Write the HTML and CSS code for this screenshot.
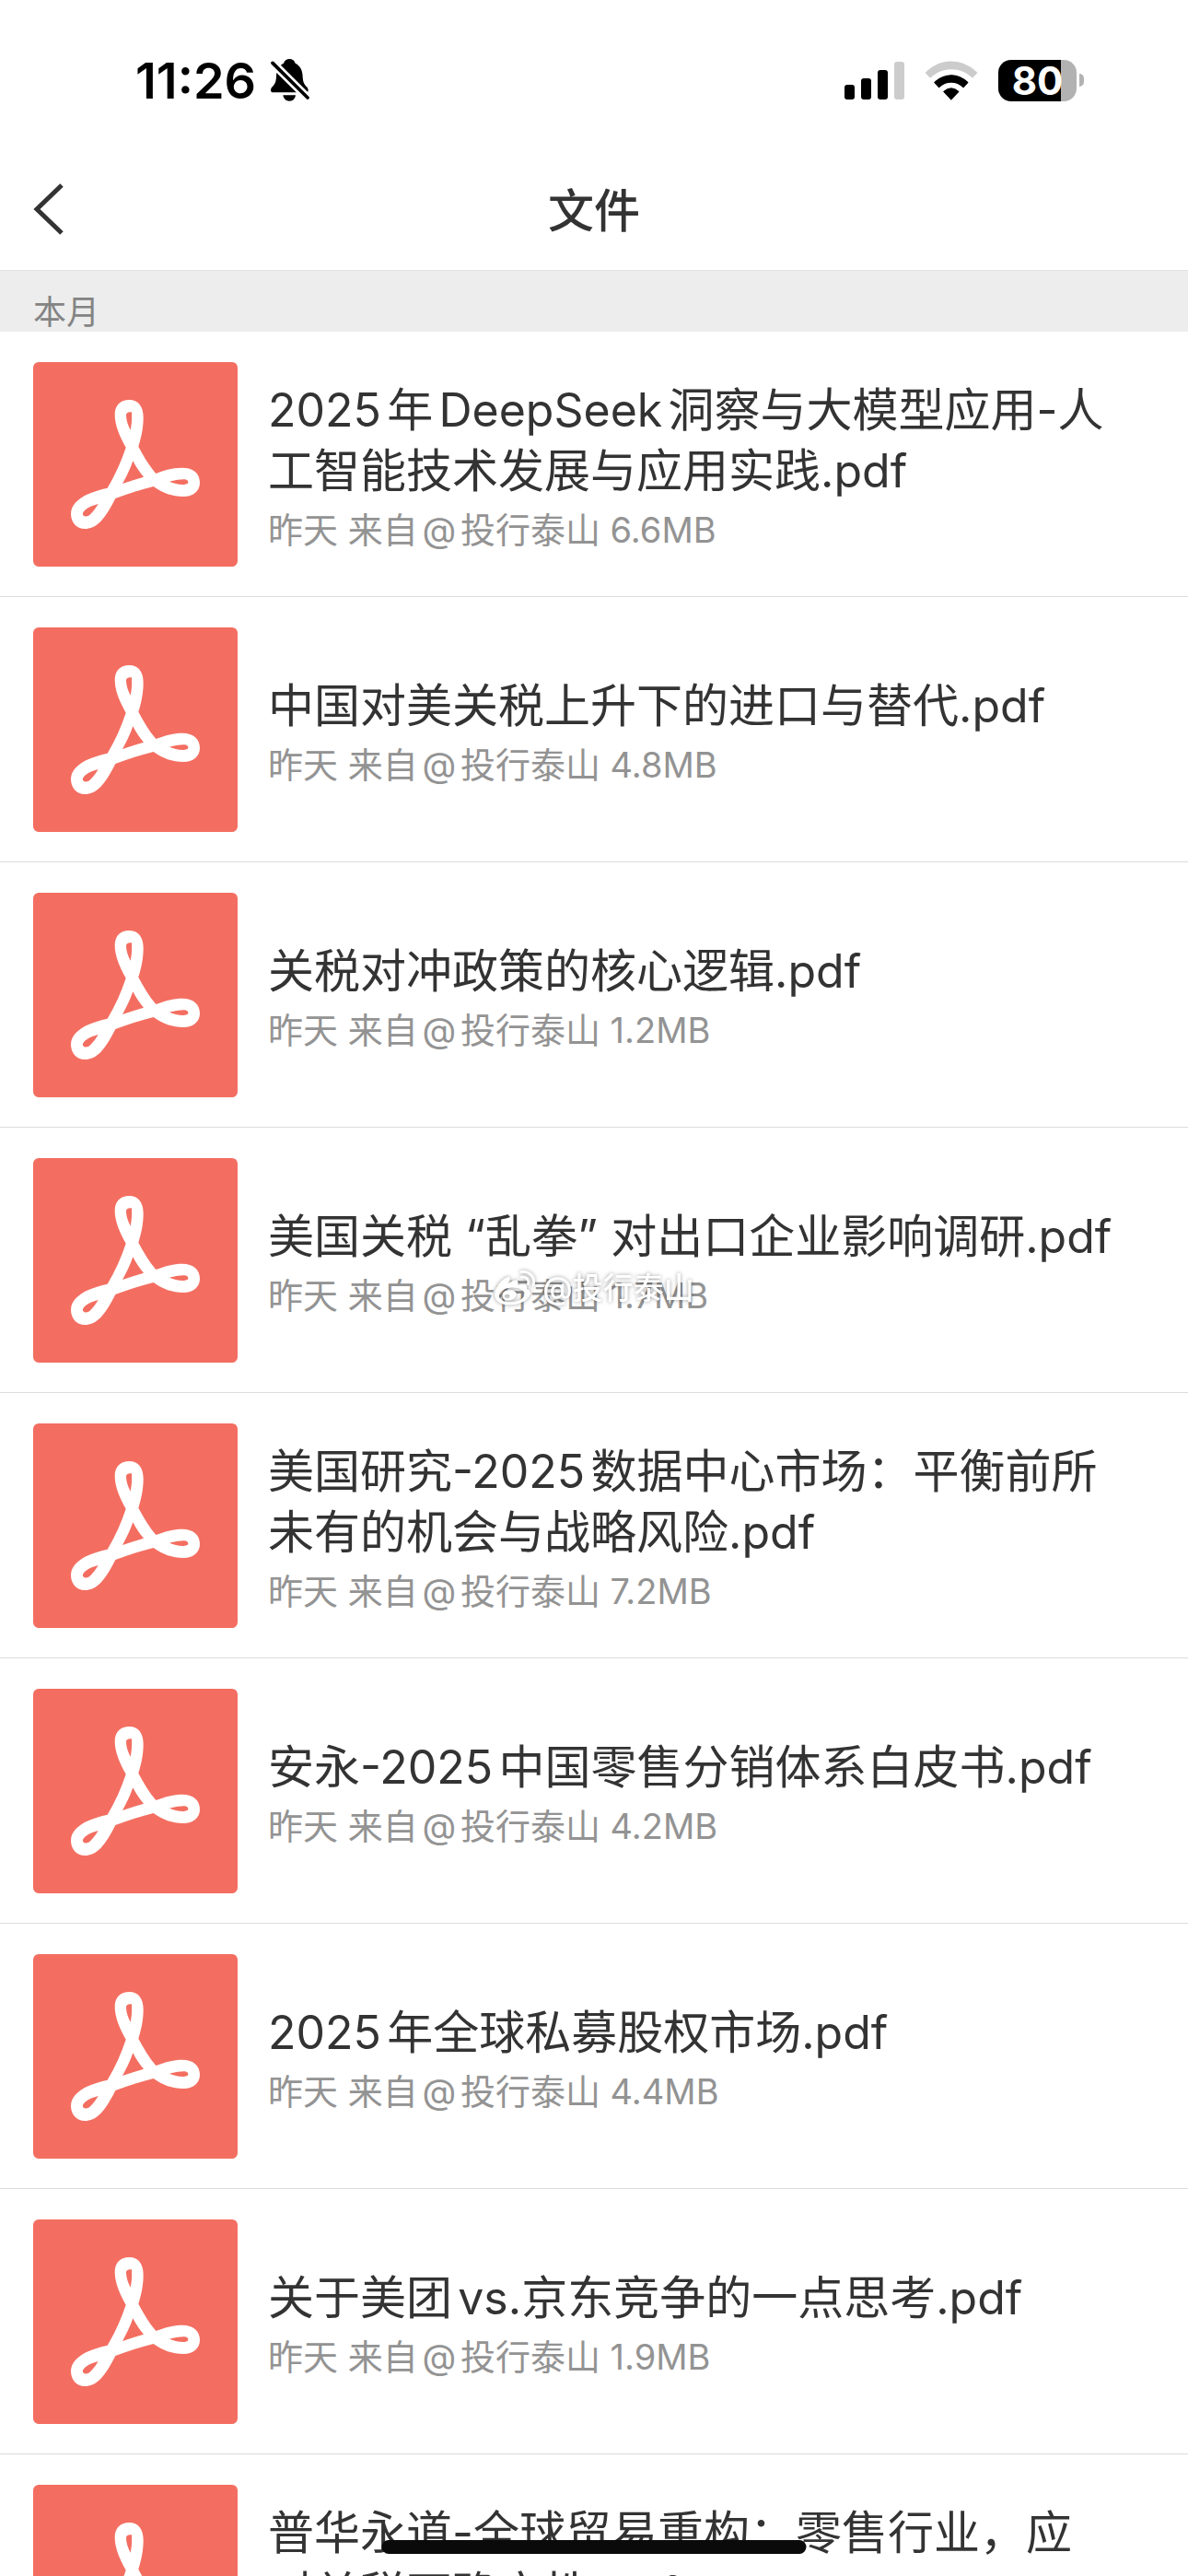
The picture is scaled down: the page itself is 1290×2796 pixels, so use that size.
FILE: index.html
```html
<!DOCTYPE html>
<html lang="zh-CN">
<head>
    <meta charset="UTF-8">
    <meta name="viewport" content="width=device-width, initial-scale=1.0">
    <title>文件</title>
    <link rel="stylesheet" href="styles.css">
</head>
<body>
    <!-- Shared icon shapes -->
    <svg class="sprite" aria-hidden="true">
        <symbol id="pdf" viewBox="108 69 666 666">
            <path fill="#fff" fill-rule="evenodd" d="M410 347C390 312 374 275 374 240C374 208 394 192 421 192C450 192 467 212 467 250C467 285 460 315 451 344C468 376 485 405 508 432C540 420 565 413 594 413C630 413 651 432 651 462C651 490 628 507 598 507C560 507 530 495 500 474C460 484 418 497 376 513C360 545 345 570 328 588C310 606 293 612 277 612C248 612 231 590 231 563C231 535 255 515 280 502C305 490 328 484 350 479C375 437 395 392 410 347ZM411 243C411 234 416 231 429 232C430 255 429 272 425 290C417 275 411 258 411 243ZM552 458C575 453 590 451 600 451C609 451 613 456 613 460C613 466 606 468 595 468C580 468 565 463 552 458ZM320 531C312 545 303 556 295 564C286 572 280 573 274 570C268 567 268 560 274 554C282 545 300 536 320 531ZM433 391C424 417 412 442 399 465C422 457 445 450 468 443C455 428 443 410 433 391Z"/>
        </symbol>
    </svg>

    <div class="app">
        <header class="status-bar">
            <div class="status-left">
                <span class="time">11:26</span>
                <svg class="bell" viewBox="24 30 126 138">
                    <path d="M85 30C76 30 68 36 66 44C50 52 42 68 42 88C41 105 38 112 29 121C22 128 22 139 32 139H138C148 139 148 128 141 121C132 112 129 105 128 88C128 68 120 52 104 44C102 36 94 30 85 30Z"/>
                    <path d="M64 148H105C103 160 96 167 85 167S66 160 64 148Z"/>
                    <path d="M20 33L154 166" stroke="#fff" stroke-width="27"/>
                    <path d="M30 43L144 156" stroke="#000" stroke-width="11" stroke-linecap="round"/>
                </svg>
            </div>
            <div class="status-right">
                <svg class="signal" viewBox="0 0 65 42">
                    <rect x="0" y="26" width="11" height="16" rx="3"/>
                    <rect x="18" y="19" width="11" height="23" rx="3"/>
                    <rect x="36" y="10" width="11" height="32" rx="3"/>
                    <rect x="54" y="1" width="11" height="41" rx="3" fill="#ccc"/>
                </svg>
                <svg class="wifi" viewBox="310 43 175 130">
                    <g stroke-width="4" stroke-linejoin="round">
                        <path d="M314 82C362 35 432 35 481 82L467 97C428 60 367 60 328 97Z" fill="#ccc" stroke="#ccc"/>
                        <path d="M343 114C375 83 419 83 451 114L437 129C414 107 380 107 357 129Z" stroke="#000"/>
                        <path d="M373 144C388 131 406 131 421 144L397 169Z" stroke="#000"/>
                    </g>
                </svg>
                <div class="battery">
                    <span class="battery-body">80</span>
                    <span class="battery-cap"></span>
                </div>
            </div>
        </header>

        <nav class="nav-bar">
            <button class="back" aria-label="返回">
                <svg viewBox="0 0 34 58">
                    <path d="M31 3L4 29L31 55" fill="none" stroke="#333" stroke-width="5"/>
                </svg>
            </button>
            <h1>文件</h1>
        </nav>

        <h2 class="section-title">本月</h2>

        <ul class="file-list">
            <li class="file">
                <svg class="file-icon"><use href="#pdf"/></svg>
                <div class="file-info">
                    <h3>2025年DeepSeek洞察与大模型应用-人工智能技术发展与应用实践<span class="tight">.pdf</span></h3>
                    <p>昨天 来自@投行泰山 6.6MB</p>
                </div>
            </li>
            <li class="file">
                <svg class="file-icon"><use href="#pdf"/></svg>
                <div class="file-info">
                    <h3>中国对美关税上升下的进口与替代<span class="tight">.pdf</span></h3>
                    <p>昨天 来自@投行泰山 4.8MB</p>
                </div>
            </li>
            <li class="file">
                <svg class="file-icon"><use href="#pdf"/></svg>
                <div class="file-info">
                    <h3>关税对冲政策的核心逻辑<span class="tight">.pdf</span></h3>
                    <p>昨天 来自@投行泰山 1.2MB</p>
                </div>
            </li>
            <li class="file">
                <svg class="file-icon"><use href="#pdf"/></svg>
                <div class="file-info">
                    <h3>美国关税 “乱拳” 对出口企业影响调研<span class="tight">.pdf</span></h3>
                    <p>昨天 来自@投行泰山 1.7MB</p>
                </div>
            </li>
            <li class="file">
                <svg class="file-icon"><use href="#pdf"/></svg>
                <div class="file-info">
                    <h3>美国研究-2025数据中心市场：平衡前所未有的机会与战略风险<span class="tight">.pdf</span></h3>
                    <p>昨天 来自@投行泰山 7.2MB</p>
                </div>
            </li>
            <li class="file">
                <svg class="file-icon"><use href="#pdf"/></svg>
                <div class="file-info">
                    <h3>安永-2025中国零售分销体系白皮书<span class="tight">.pdf</span></h3>
                    <p>昨天 来自@投行泰山 4.2MB</p>
                </div>
            </li>
            <li class="file">
                <svg class="file-icon"><use href="#pdf"/></svg>
                <div class="file-info">
                    <h3>2025年全球私募股权市场<span class="tight">.pdf</span></h3>
                    <p>昨天 来自@投行泰山 4.4MB</p>
                </div>
            </li>
            <li class="file">
                <svg class="file-icon"><use href="#pdf"/></svg>
                <div class="file-info">
                    <h3>关于美团vs<span class="tight">.京东竞争的一点思考.pdf</span></h3>
                    <p>昨天 来自@投行泰山 1.9MB</p>
                </div>
            </li>
            <li class="file">
                <svg class="file-icon"><use href="#pdf"/></svg>
                <div class="file-info">
                    <h3>普华永道-全球贸易重构：零售行业，应对关税不确定性<span class="tight">.pdf</span></h3>
                    <p>昨天 来自@投行泰山</p>
                </div>
            </li>
        </ul>

        <div class="watermark">
            <svg viewBox="34 40 134 114">
                <path fill-rule="evenodd" d="M80 61C64 65 44 86 37 108C30 138 54 152 84 152C120 152 146 136 152 118C155 107 148 102 140 100C143 90 140 82 120 86C114 87 112 89 112 85C115 70 104 66 80 82C88 68 88 59 80 61ZM87 96C112 94 134 103 133 118C131 134 110 143 86 143C62 143 48 132 51 119C54 106 68 98 87 96ZM84 104C68 104 60 114 61 124C63 136 76 140 89 136C104 132 112 118 104 110C99 105 92 104 84 104ZM77 117A8 7 0 1 0 77 131A8 7 0 1 0 77 117Z"/>
                <path d="M122 45C148 39 170 61 162 88M123 62C138 58 149 70 145 84" fill="none" stroke="#fff" stroke-width="8" stroke-linecap="round"/>
            </svg>
            <span>@投行泰山</span>
        </div>
        <div class="home-indicator"></div>
    </div>
</body>
</html>
```
FILE: styles.css
```css
* {
    box-sizing: border-box;
    margin: 0;
    padding: 0;
}

body {
    font-family: Inter, 'Noto Sans CJK SC', sans-serif;
    background-color: #fff;
    color: #333;
    text-autospace: normal;
}

.sprite {
    position: absolute;
    width: 0;
    height: 0;
}

.app {
    position: relative;
    display: flex;
    flex-direction: column;
    height: 100vh;
    overflow: hidden;
}

/* Status bar */
.status-bar {
    display: flex;
    justify-content: space-between;
    align-items: center;
    flex: none;
    height: 174px;
    padding: 0 113px 0 147px;
    color: #000;
}

.status-left {
    display: flex;
    align-items: center;
    gap: 16px;
}

.time {
    font-size: 54px;
    font-weight: 600;
}

.bell {
    width: 42px;
    height: 46px;
}

.status-right {
    display: flex;
    align-items: center;
    gap: 22px;
}

.signal {
    width: 65px;
    height: 42px;
}

.wifi {
    width: 58px;
    height: 43px;
}

.battery {
    display: flex;
    align-items: center;
    gap: 3px;
}

.battery-body {
    width: 85px;
    height: 45px;
    border-radius: 14px;
    background: linear-gradient(to right, #000 80%, #b2b2b2 80%);
    color: #fff;
    font-size: 42px;
    font-weight: 700;
    line-height: 45px;
    text-align: center;
}

.battery-cap {
    width: 5px;
    height: 14px;
    border-radius: 0 5px 5px 0;
    background-color: #b2b2b2;
}

/* Navigation bar */
.nav-bar {
    position: relative;
    display: flex;
    justify-content: center;
    align-items: center;
    flex: none;
    height: 119px;
    padding-bottom: 10px;
}

.nav-bar h1 {
    font-size: 50px;
    font-weight: 500;
    line-height: 66px;
}

.back {
    position: absolute;
    left: 36px;
    top: 24px;
    width: 34px;
    height: 58px;
    border: none;
    background: none;
    cursor: pointer;
}

.back svg {
    display: block;
    width: 34px;
    height: 58px;
}

.section-title {
    flex: none;
    height: 67px;
    padding: 18px 36px 0;
    border-top: 1px solid #e2e2e2;
    background-color: #ededed;
    color: #848484;
    font-size: 36px;
    font-weight: 400;
    line-height: 54px;
}

/* File list */
.file-list {
    flex: 1;
    min-height: 0;
    list-style: none;
}

.file {
    display: flex;
    align-items: center;
    gap: 33px;
    height: 288px;
    padding: 0 78px 0 36px;
    border-bottom: 1px solid #dcdcdc;
}

.file-icon {
    flex: none;
    width: 222px;
    height: 222px;
    border-radius: 6px;
    background-color: #f36e61;
}

.file-info {
    flex: 1;
    padding-top: 6px;
}

.file-info h3 {
    font-size: 50px;
    font-weight: 400;
    line-height: 66px;
}

/* no extra space between Chinese text and a dot */
.tight {
    text-autospace: no-autospace;
}

.file-info p {
    margin-top: 4px;
    color: #939393;
    font-size: 38px;
    line-height: 54px;
}

/* Overlays */
.watermark {
    position: absolute;
    top: 50%;
    left: 50%;
    display: flex;
    align-items: center;
    gap: 8px;
    transform: translate(-50%, -50%);
    color: #fff;
    font-size: 33px;
    font-weight: 500;
    line-height: 40px;
    white-space: nowrap;
    text-autospace: no-autospace;
    filter: drop-shadow(0 0 2px rgba(0, 0, 0, 0.4));
}

.watermark svg {
    width: 45px;
    height: 38px;
    fill: #fff;
}

.home-indicator {
    position: absolute;
    bottom: 24px;
    left: 50%;
    width: 461px;
    height: 15px;
    border-radius: 8px;
    background-color: #0a0a0a;
    transform: translateX(-50%);
}
```
